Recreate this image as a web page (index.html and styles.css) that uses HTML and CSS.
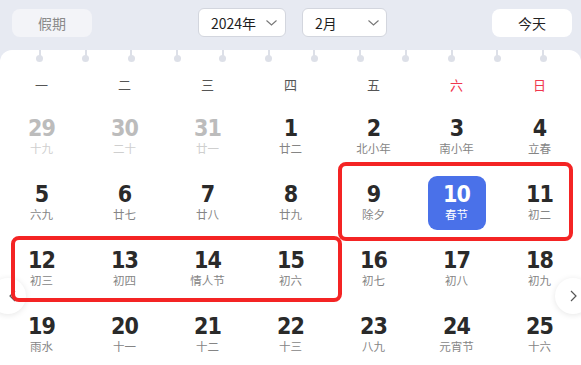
FILE: index.html
```html
<!DOCTYPE html>
<html lang="zh">
<head>
<meta charset="utf-8">
<link rel="stylesheet" href="styles.css">
</head>
<body>
<div class="page">
  <div class="topbar">
    <button class="btn-holiday">假期</button>
    <div class="select sel-year"><span>2024年</span><svg width="11" height="6" viewBox="0 0 11 6"><path d="M0.5 0.5 L5.5 5 L10.5 0.5" fill="none" stroke="#777" stroke-width="1.1"/></svg></div>
    <div class="select sel-month"><span>2月</span><svg width="11" height="6" viewBox="0 0 11 6"><path d="M0.5 0.5 L5.5 5 L10.5 0.5" fill="none" stroke="#777" stroke-width="1.1"/></svg></div>
    <button class="btn-today">今天</button>
  </div>
  <div class="card">
    <div class="pins">
      <i></i><i></i><i></i><i></i><i></i><i></i><i></i><i></i><i></i><i></i><i></i><i></i>
    </div>
    <div class="weekdays">
      <span>一</span><span>二</span><span>三</span><span>四</span><span>五</span><span class="wkend">六</span><span class="wkend">日</span>
    </div>
    <div class="grid">
      <div class="day other"><b>29</b><small>十九</small></div>
      <div class="day other"><b>30</b><small>二十</small></div>
      <div class="day other"><b>31</b><small>廿一</small></div>
      <div class="day"><b>1</b><small>廿二</small></div>
      <div class="day"><b>2</b><small>北小年</small></div>
      <div class="day"><b>3</b><small>南小年</small></div>
      <div class="day"><b>4</b><small>立春</small></div>

      <div class="day"><b>5</b><small>六九</small></div>
      <div class="day"><b>6</b><small>廿七</small></div>
      <div class="day"><b>7</b><small>廿八</small></div>
      <div class="day"><b>8</b><small>廿九</small></div>
      <div class="day"><b>9</b><small>除夕</small></div>
      <div class="day"><div class="selected"><b>10</b><small>春节</small></div></div>
      <div class="day"><b>11</b><small>初二</small></div>

      <div class="day"><b>12</b><small>初三</small></div>
      <div class="day"><b>13</b><small>初四</small></div>
      <div class="day"><b>14</b><small>情人节</small></div>
      <div class="day"><b>15</b><small>初六</small></div>
      <div class="day"><b>16</b><small>初七</small></div>
      <div class="day"><b>17</b><small>初八</small></div>
      <div class="day"><b>18</b><small>初九</small></div>

      <div class="day"><b>19</b><small>雨水</small></div>
      <div class="day"><b>20</b><small>十一</small></div>
      <div class="day"><b>21</b><small>十二</small></div>
      <div class="day"><b>22</b><small>十三</small></div>
      <div class="day"><b>23</b><small>八九</small></div>
      <div class="day"><b>24</b><small>元宵节</small></div>
      <div class="day"><b>25</b><small>十六</small></div>
    </div>
    <div class="nav nav-prev"><svg width="7" height="12" viewBox="0 0 7 12"><path d="M6 1 L1 6 L6 11" fill="none" stroke="#555" stroke-width="1.2"/></svg></div>
    <div class="nav nav-next"><svg width="7" height="12" viewBox="0 0 7 12"><path d="M1 1 L6 6 L1 11" fill="none" stroke="#555" stroke-width="1.2"/></svg></div>
  </div>
  <div class="mark mark-1"></div>
  <div class="mark mark-2"></div>
</div>
</body>
</html>
```
FILE: styles.css
```css
html, body {
  margin: 0;
  padding: 0;
  height: 365px;
  overflow: hidden;
}
body {
  background: #e7eaf2;
  font-family: "Noto Sans CJK SC", "Noto Sans", sans-serif;
  color: #222;
}
.page {
  position: relative;
  width: 581px;
  height: 365px;
}
.topbar {
  height: 50px;
  box-sizing: border-box;
  display: flex;
  align-items: flex-start;
  padding: 8px 9px 0 12px;
}
button {
  font-family: inherit;
  border: none;
  cursor: pointer;
}
.btn-holiday {
  width: 80px;
  height: 28px;
  margin-top: 1px;
  border-radius: 8px;
  background: #f3f4f8;
  color: #8a8a8a;
  font-size: 14px;
  padding: 0;
}
.select {
  height: 29px;
  box-sizing: border-box;
  background: #fff;
  border: 1px solid #d3d6de;
  border-radius: 6px;
  display: flex;
  align-items: center;
  justify-content: space-between;
  padding: 0 8px 0 12px;
  font-size: 14px;
  color: #1e1e1e;
}
.sel-year {
  width: 88px;
  margin-left: 106px;
}
.sel-month {
  width: 85px;
  margin-left: 16px;
  padding-right: 7px;
}
.btn-today {
  margin-left: auto;
  width: 80px;
  height: 28px;
  margin-top: 1px;
  border-radius: 8px;
  background: #fff;
  color: #222;
  font-size: 14px;
  padding: 0;
}
.card {
  position: relative;
  background: #fff;
  border-radius: 12px 12px 0 0;
  height: 315px;
}
.pins {
  display: grid;
  grid-template-columns: repeat(12, 45.75px);
  padding-left: 17px;
  height: 14px;
}
.pins i {
  position: relative;
  justify-self: center;
  width: 7px;
  height: 13px;
}
.pins i::before {
  content: "";
  position: absolute;
  left: 2.5px;
  top: 0;
  width: 2px;
  height: 7px;
  background: #dde0e8;
}
.pins i::after {
  content: "";
  position: absolute;
  left: 0;
  top: 5px;
  width: 7px;
  height: 7px;
  border-radius: 50%;
  background: #dde0e8;
}
.weekdays {
  display: grid;
  grid-template-columns: repeat(7, 83px);
  margin-top: 6px;
  height: 30px;
  line-height: 30px;
  font-size: 13px;
  color: #555;
  text-align: center;
}
.weekdays .wkend {
  color: #f0364d;
}
.grid {
  margin-top: 4px;
  display: grid;
  grid-template-columns: repeat(7, 83px);
  grid-auto-rows: 66px;
}
.day {
  display: flex;
  flex-direction: column;
  align-items: center;
  justify-content: center;
  padding-bottom: 1px;
}
.day b {
  font-family: "Liberation Sans Narrow", "DejaVu Sans Condensed", "Roboto", sans-serif;
  font-weight: 700;
  font-size: 23px;
  line-height: 22px;
  letter-spacing: -0.8px;
  color: #2a2a2a;
}
.day small {
  font-size: 11.5px;
  line-height: 18px;
  color: #858585;
}
.day.other b {
  color: #bcbcbc;
}
.day.other small {
  color: #cfcfcf;
}
.selected {
  width: 58px;
  height: 54px;
  border-radius: 9px;
  background: #4a71e9;
  display: flex;
  flex-direction: column;
  align-items: center;
  justify-content: center;
}
.selected b, .selected small {
  color: #fff;
}
.nav {
  position: absolute;
  top: 228px;
  width: 36px;
  height: 36px;
  border-radius: 50%;
  background: #fff;
  box-shadow: 0 1px 6px rgba(0, 0, 0, 0.1);
  display: flex;
  align-items: center;
  justify-content: center;
}
.nav-prev {
  left: -10px;
  padding-left: 8px;
  box-sizing: border-box;
}
.nav-next {
  left: 555px;
}
.mark {
  position: absolute;
  border: 4px solid #f42424;
  border-radius: 8px;
  box-sizing: border-box;
}
.mark-1 {
  left: 338px;
  top: 162px;
  width: 235px;
  height: 79px;
}
.mark-2 {
  left: 11px;
  top: 236px;
  width: 331px;
  height: 66px;
}
```
